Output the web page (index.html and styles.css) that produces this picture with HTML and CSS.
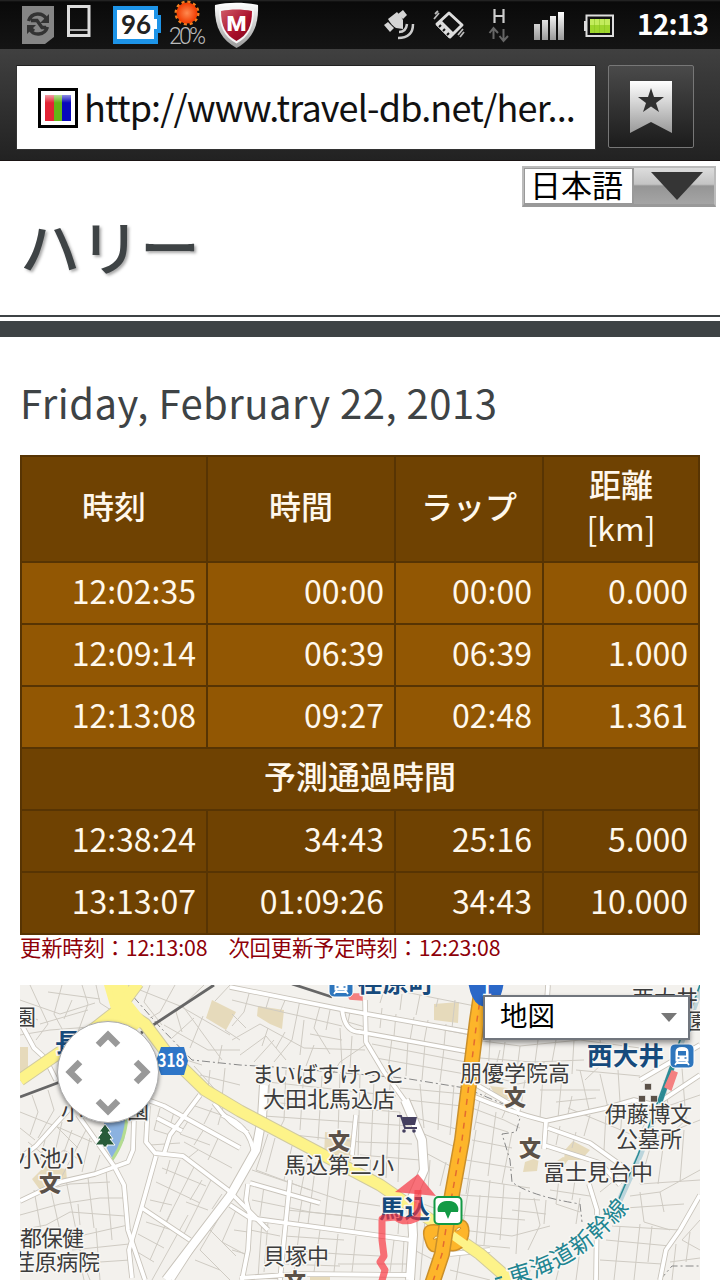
FILE: index.html
```html
<!DOCTYPE html>
<html lang="ja">
<head>
    <meta charset="UTF-8">
    <meta name="viewport" content="width=device-width, initial-scale=1.0">
    <title>ハリー</title>
    <link rel="stylesheet" href="styles.css">
</head>
<body>
    <div class="status-bar">
        <svg class="status-icons" width="270" height="49" viewBox="0 0 270 49">
            <defs>
                <linearGradient id="silver" x1="0" y1="0" x2="0" y2="1"><stop offset="0" stop-color="#fff"/><stop offset="1" stop-color="#999"/></linearGradient>
                <radialGradient id="sun"><stop offset="0" stop-color="#ff8a50"/><stop offset="1" stop-color="#f03a00"/></radialGradient>
                <linearGradient id="red" x1="0" y1="0" x2="1" y2="1"><stop offset="0" stop-color="#d05a68"/><stop offset=".6" stop-color="#a80d28"/><stop offset="1" stop-color="#7c0820"/></linearGradient>
            </defs>
            <path d="M22 6h32v31l-9 7H22z" fill="#858585"/>
            <g fill="none" stroke="#333" stroke-width="3.4">
                <path d="M28.500 21c3-9 14-9 18-2M47.500 27c-3 9-14 9-18 2M31 20.500h6l5 7h4M29 27l5 4"/>
            </g>
            <path d="M49 14v9h-9zM27 34v-9h9z" fill="#333"/>
            <path d="M68.500 6.500h20.500v29h-20.500z" fill="none" stroke="#ddd" stroke-width="3"/>
            <path d="M68 30h22" stroke="#ddd" stroke-width="1.500"/>
            <path d="M71 32.500h4m2 0h4m2 0h4" stroke="#111" stroke-width="2"/>
            <path d="M113 6h45v9h3v18h-3v11h-45z" fill="#1d94e8"/>
            <path d="M117 10h37v9h3v10h-3v10h-37z" fill="#fff"/>
            <text x="121" y="34" class="battery-num" textLength="30">96</text>
            <circle cx="187" cy="13" r="11" fill="none" stroke="#f08020" stroke-width="3" stroke-dasharray="3 2.760"/>
            <circle cx="187" cy="13" r="10.500" fill="url(#sun)"/>
            <text x="169" y="44" class="rain" textLength="37">20%</text>
            <path d="M215 5c13-3 29-3 43 0 1 21-6 35-21.500 43C221 40 214 26 215 5z" fill="url(#silver)"/>
            <path d="M219 9c11-2.500 24-2.500 35 0 0 17-5 28-17.500 34.500-12.500-6.500-17.500-17.500-17.500-34.500z" fill="#f5f5f5"/>
            <path d="M221 11c10-2 21-2 31 0 0 15-4.500 24-15.500 30-11-6-15.500-15-15.500-30z" fill="url(#red)"/>
            <text x="226.500" y="31" class="shield-m" textLength="20" lengthAdjust="spacingAndGlyphs">M</text>
        </svg>
        <svg class="status-icons" width="256" height="49" viewBox="380 0 256 49">
            <g fill="#d4d4d4">
                <path d="M384 25l4-3 6 6-4 4zM398 14l5-4 4 5-4 4zM388 19l9-7c3 4 4 4 6 8v9l-7-1c-3-2-5-4-8-9z"/>
            </g>
            <path d="M399 32q7 0 8-8M398 38q15 0 15-14" fill="none" stroke="#ccc" stroke-width="2.500"/>
            <path d="M449 13l13 12-12 12-13-13z" fill="none" stroke="#ddd" stroke-width="3" stroke-linejoin="round"/>
            <path d="M441 20l13 13-5 5-13-13z" fill="#ddd"/>
            <path d="M449 16l10 9-6 6-9-9z" fill="#111"/>
            <path d="M439 27l2-2M443 31l2-2M447 35l2-2" stroke="#111" stroke-width="2"/>
            <path d="M434 19l5-6M435 14l3-3M458 35l5-6M460 37l4-5" stroke="#bbb" stroke-width="1.800"/>
            <path d="M494.500 9v14M503.500 9v14M494 16h10" stroke="#ccc" stroke-width="2.200"/>
            <path d="M493.500 39V28m-4 5l4-5 4.500 5M503.500 29v11m-4-4l4 5 4.500-5" fill="none" stroke="#666" stroke-width="2"/>
            <path d="M534 24h6v16h-6zM542 20h6v20h-6zM550 16h6v24h-6zM558 12h6v28h-6z" fill="url(#silver)"/>
            <path d="M586.500 15.500h26.500v20.500h-26.500z" fill="#111" stroke="#ddd" stroke-width="2"/>
            <path d="M584 21h2v10h-2z" fill="#ddd"/>
            <path d="M590 19h20v14h-20z" fill="#9ed62c"/>
            <path d="M590 19h20v6h-20z" fill="#c3ec5c"/>
            <path d="M594.500 19v14M599.500 19v14M604.500 19v14" stroke="#84bc20" stroke-opacity=".5"/>
        </svg>
        <span class="clock">12:13</span>
    </div>

    <div class="address-bar">
        <div class="url-box">
            <div class="favicon"><div class="favicon-stripes"></div></div>
            <span class="url">http://www.travel-db.net/her...</span>
        </div>
        <div class="bookmark">
            <svg width="42" height="52" viewBox="0 0 42 52">
                <path d="M0 0h42v52L21 41 0 52z" fill="url(#silver)"/>
                <path d="M21 7l3 9h10l-8 6 3 9-8-5.500-8 5.500 3-9-8-6h10z" fill="#303030"/>
            </svg>
        </div>
    </div>

    <div class="page-header">
        <div class="lang-select">
            <span class="lang-name">日本語</span>
            <span class="lang-arrow"><svg width="52" height="28" viewBox="0 0 52 28"><path d="M0 0h52L26 28z" fill="#353535"/></svg></span>
        </div>
        <h1>ハリー</h1>
    </div>
    <div class="divider"></div>

    <div class="content">
        <h2>Friday, February 22, 2013</h2>

        <table class="laps">
            <colgroup><col class="c1"><col class="c2"><col class="c3"><col class="c4"></colgroup>
            <tr class="head"><th>時刻</th><th>時間</th><th>ラップ</th><th>距離<br><span class="unit">[km]</span></th></tr>
            <tr><td>12:02:35</td><td>00:00</td><td>00:00</td><td>0.000</td></tr>
            <tr><td>12:09:14</td><td>06:39</td><td>06:39</td><td>1.000</td></tr>
            <tr><td>12:13:08</td><td>09:27</td><td>02:48</td><td>1.361</td></tr>
            <tr class="dark"><th colspan="4">予測通過時間</th></tr>
            <tr class="dark"><td>12:38:24</td><td>34:43</td><td>25:16</td><td>5.000</td></tr>
            <tr class="dark"><td>13:13:07</td><td>01:09:26</td><td>34:43</td><td>10.000</td></tr>
        </table>
        <p class="updated">更新時刻：12:13:08　次回更新予定時刻：12:23:08</p>

        <div class="map">
            <svg class="map-canvas" width="680" height="295" viewBox="20 985 680 295">
                <defs>
                    <!-- 幅の広い道 -->
                    <g id="wide">
                        <path d="M264 1085L262 1118 256 1150 230 1196 166 1280"/>
                        <path d="M405 1100L422 1140 424 1170 411 1200 413 1235 410 1280"/>
                    </g>
                    <!-- 白い道 -->
                    <g id="roads">
                        <path d="M20 1201L60 1182 95 1174 128 1162 133 1150 134 1118"/>
                        <path d="M20 1022L34 1048 45 1058 56 1080M72 1106L36 1146 20 1158M78 1115L114 1166 124 1185 128 1230 145 1280"/>
                        <path d="M148 1100L164 1106 240 1148M148 1106L146 1142 155 1153 183 1156 228 1190 268 1230M157 1118L182 1131M200 1095L170 1135 164 1154M156 1156L142 1206 129 1250 132 1278M142 1208L190 1240M172 1280L212 1218M214 1103Q230 1125 248 1133"/>
                        <path d="M230 987L345 1010 474 1033M342 1008Q344 1032 360 1032L470 1052M365 1000L366 1042 384 1072 408 1105"/>
                        <path d="M222 1115Q250 1125 254 1154M250 1183L320 1203M248 1184L246 1200 250 1216 248 1250 242 1280M230 1205L250 1218 411 1240M290 1180L280 1280M240 1278L300 1274 410 1275M356 1115L352 1155"/>
                        <path d="M470 1095Q510 1112 546 1121L606 1108 634 1100 655 1105 700 1075M475 1084L520 1110M546 1121L544 1149M544 1145L600 1163 620 1185M548 1128L590 1143 625 1168M589 1184L597 1210 596 1280M700 1195L680 1230 666 1250 660 1280"/>
                        <path d="M548 985L547 1000M480 1010L484 1015M640 1080L700 1045M450 1254L490 1250"/>
                    </g>
                    <path id="yellow" d="M138 983L118 1010 95 1028 20 1080M116 980L121 1008 145 1024 166 1052 205 1090 240 1111 380 1185 480 1254 512 1282"/>
                    <path id="orange" d="M483 980L477 1020 462 1140 447 1222 442 1254 432 1284"/>
                    <path id="line-name" d="M511 1285Q580 1268 628 1209"/>
                </defs>
                <rect x="20" y="985" width="680" height="295" fill="#f3f1ed"/>
                <!-- 施設の敷地 -->
                <g fill="#e6dabb">
                    <path d="M212 1000L236 1012 226 1030 206 1018zM258 1006L284 1010 282 1029 270 1024 257 1016zM20 1047h8v24l-8 4zM32 1179L45 1166 66 1169 67 1180 40 1190zM434 1004l25-2-1 21-24-3zM325 1132l28 4-2 25-27-4zM565 1150l8-9 17 9-9 10-17 0zM490 1086l17 2 10 12-20-2zM525 1162l14-5-2 14-14 1zM551 1165l12-8 6 2-6 8zM310 1274h20v6h-20z"/>
                </g>
                <path d="M104 1120L128 1116 124 1140 113 1160 104 1143z" fill="#8bb2e0"/>
                <path d="M127 1115Q126 1140 112 1160" fill="none" stroke="#b4dc90" stroke-width="3"/>
                <!-- 区画線 -->
                <g class="parcels">
                    <path d="M20 1000L60 1014 95 1003M30 985L48 1024 36 1040M62 985L54 1014 68 1040M82 985L88 1004 78 1032M40 1024L88 1010M20 1012L38 1020M20 1035L50 1030 90 1027M96 985L100 1003 114 1012M48 992L100 999M72 1000L64 1019"/>
                    <path d="M140 990L180 1006 230 1035M150 985L144 1002 162 1025M175 985L160 1012 150 1018M204 985L176 1012 182 1032M182 1005L222 1060M230 985L215 1001M225 1030L240 1040M203 1016L190 1048M164 1025L208 1050 240 1050M172 1038L194 1018M194 1066L220 1095M222 1045L218 1064M210 1070L208 1090M225 1068L222 1098M200 1075L240 1085M180 1058L202 1065"/>
                    <path d="M20 1112L60 1128 92 1142M32 1095L38 1112 30 1135M48 1090L54 1110 38 1138M28 1142L50 1160 64 1150 80 1160M55 1125L78 1148M20 1128L35 1140M45 1140L40 1160M62 1122L56 1148M72 1130L64 1152M90 1138L82 1172M86 1130L60 1180M100 1155L94 1174M40 1191L70 1184 110 1182M20 1215L60 1204 100 1198 124 1198M34 1190L42 1236M50 1186L62 1240M66 1180L82 1260 90 1280M88 1178L94 1228M106 1170L112 1240M20 1230L46 1225 70 1212 125 1216M62 1240L128 1225M96 1228L100 1280M72 1250L129 1244M100 1262L130 1260M78 1204L80 1225M84 1280L80 1262"/>
                    <path d="M160 1108L154 1130 170 1135M174 1112L170 1126M190 1118L180 1134 210 1145M206 1126L194 1145M220 1134L208 1160M195 1106L230 1118M212 1108L204 1124M225 1100L218 1125M150 1145L180 1143M184 1142L232 1168M198 1150L188 1158M162 1168L206 1186M156 1182L200 1203M180 1160L160 1212M195 1165L166 1222M212 1178L182 1238M150 1200L172 1205M172 1210L150 1260M188 1215L152 1280M146 1222L172 1230M138 1234L164 1248M134 1250L154 1262M186 1202L208 1210M202 1180L190 1200M222 1194L212 1209M210 1230L236 1256M220 1216L200 1250 230 1280M195 1260L220 1270M236 1210L222 1242 248 1256M245 1170L238 1180M170 1160L166 1174"/>
                    <path d="M232 1000L256 1006 300 1016 342 1026M250 990L244 1012 232 1026M270 995L266 1008M300 1000L292 1040 274 1062M286 998L280 1012M320 1006L314 1028 330 1054M330 1010L326 1030M232 1040L260 1024 304 1048 365 1050M240 1055L266 1036 286 1060M254 1062L274 1040M304 1020L300 1055M340 1028L342 1066M352 1036L350 1068M310 1034L342 1040M314 1045L306 1066M365 1045L340 1062 330 1078M246 1028L232 1014M268 1028L262 1046M285 1032L276 1048M350 1012L348 1022 365 1027M382 1008L380 1028M396 1014L394 1036M414 1017L410 1040M428 1020L424 1042M446 1024L444 1046M455 1000L452 1028M370 985L420 995 475 1006M384 990L380 1003M402 994L400 1010M420 995L416 1015M438 999L436 1007M372 1016L430 1027 470 1035M372 1044L466 1062M392 1038L388 1070M408 1040L406 1076M425 1044L422 1080M444 1048L440 1082M376 1058L465 1074M400 1088L464 1094M408 1100L462 1106M420 1084L424 1128M440 1085L438 1130M454 1085L450 1135M416 1118L460 1130M424 1134L458 1148M424 1152L454 1168"/>
                    <path d="M270 1072L268 1110M286 1070L284 1120 278 1132M304 1070L300 1130M322 1076L318 1140M340 1074L338 1134M360 1074L358 1160M374 1080L370 1172M390 1085L386 1178M268 1082L396 1096M266 1102L400 1112M264 1116L410 1126M284 1134L360 1142 412 1144M360 1155L420 1160M400 1112L398 1182M268 1134L256 1170 310 1190M275 1138L266 1172M292 1146L284 1180M308 1154L300 1196M252 1200L310 1212 380 1220M264 1186L260 1216M302 1200L298 1224M316 1162L308 1224M330 1170L324 1228M346 1180L340 1230M360 1190L354 1232M252 1170L340 1200 380 1206M286 1210L350 1216M250 1230L280 1236M262 1220L258 1278M284 1236L344 1240M300 1226L294 1272M320 1230L314 1272M338 1234L334 1272M356 1236L352 1272M282 1250L340 1254 380 1256M268 1222L264 1272M394 1240L390 1272M404 1240L402 1272M338 1264L410 1264M280 1264L340 1266M234 1230L248 1232M232 1250L246 1254M400 1204L398 1234"/>
                    <path d="M416 1188L412 1200 440 1210M430 1160L428 1190M418 1215L414 1250 438 1262M425 1220L420 1280M440 1186L446 1162M450 1270L490 1280M460 1256L456 1280"/>
                    <path d="M475 1040L520 1046 580 1040 640 1048M490 1040L488 1075M505 1042L502 1064 492 1080M520 1046L516 1078M538 1040L534 1070M556 1040L552 1062M574 1040L572 1074M600 1040L604 1062 585 1080M480 1058L532 1062 584 1060M474 1070L518 1084 546 1078M500 1050L496 1066M490 1088L480 1102M510 1100L502 1118M525 1080L520 1112M544 1062L540 1118M562 1076L558 1118M580 1070L590 1114M576 1070L640 1076M600 1074L608 1108M540 1090L600 1090M556 1102L596 1098M618 1070L620 1102M572 1096L568 1114M532 1118L500 1108"/>
                    <path d="M472 1108L504 1120 520 1128M476 1122L508 1132M472 1140L512 1148M466 1160L514 1168M462 1178L530 1188M460 1195L540 1200M458 1215L525 1220M480 1100L474 1130M496 1112L488 1176M512 1132L502 1184M476 1130L466 1194M490 1180L484 1245M470 1180L462 1230M504 1184L500 1240M520 1192L516 1254M534 1198L540 1225 528 1250M462 1230L512 1236 550 1226M466 1244L510 1248M480 1195L476 1244M560 1126L556 1145M576 1132L572 1148M568 1108L640 1138M590 1115L584 1136M606 1112L604 1150M622 1112L620 1140M560 1170L556 1204 580 1212M575 1180L572 1200M550 1190L590 1196M546 1200L544 1224M512 1210L546 1214M580 1198L576 1224M615 1180L600 1192"/>
                    <path d="M700 1095L650 1112 640 1134M664 1080L668 1104M682 1068L686 1120 664 1140M700 1120L650 1140M650 1148L640 1184 700 1180M664 1140L658 1184M684 1130L680 1182M630 1196L660 1192 700 1170M625 1208L684 1204M640 1192L644 1222 670 1230M660 1192L664 1212M612 1226L680 1230M606 1240L670 1246M640 1224L634 1280M620 1226L614 1280M600 1260L662 1264M652 1226L648 1262M700 1220L682 1240 700 1250M676 1244L672 1280M690 1232L686 1262M580 1250L576 1280M560 1264L556 1280M530 1270L528 1280M670 1262L700 1258"/>
                </g>
                <path d="M123 985L160 1027 192 1060 240 1065 275 1067 403 1078 465 1088M470 1090L508 1106 520 1118 516 1132 502 1134 510 1160 512 1182Q530 1196 580 1204L582 1222M660 1280L672 1266 700 1266" class="border-line"/>
                <use href="#wide" class="casing-wide"/>
                <use href="#roads" class="casing"/>
                <use href="#roads" class="road"/>
                <use href="#wide" class="road-wide"/>
                <!-- 鉄道 -->
                <path d="M214 985L141 1033M60 1082L20 1097M292 984L332 997" fill="none" stroke="#666" stroke-width="2.800"/>
                <use href="#yellow" class="yellow-case"/>
                <path d="M104 985h24l3 16 16 20-14 12-16-10-20 12-6-10 20-16z" fill="#fdf389" stroke="none"/>
                <use href="#yellow" class="yellow-road"/>
                <path d="M426 1243q-8-20 11-18l12 3 8-8c14-2 14 14 8 24-6 8-14 8-22 4-4 6-14 6-17-5z" fill="#fdb52a" stroke="#cf9028" stroke-width="1.500"/>
                <path d="M452 1235l24 17" stroke="#fdf389" stroke-width="8"/>
                <use href="#orange" class="orange-case"/>
                <use href="#orange" class="orange-road"/>
                <use href="#orange" class="orange-dash"/>
                <path d="M433 1239q2-4 5-3-1 4-5 3zM455 1231q3-5 6-3-2 4-6 3z" fill="#f8f0c0" stroke="#cf9028"/>
                <!-- 新幹線 -->
                <path d="M702 985L672 1068 654 1118 640 1155 618 1204" fill="none" stroke="#bcd5dc" stroke-width="6"/>
                <path d="M700 985L670 1068 652 1118 638 1155 616 1206" fill="none" stroke="#2b8a94" stroke-width="1.500"/>
                <path d="M673 1066L660 1103" stroke="#2b8a94" stroke-width="4"/>
                <path d="M672 1071l5 2-6 17-6-3zM347 994h15v6l-12-1z" fill="#f48080" stroke="#f48080" stroke-width="1.500"/>

                <!-- 地名 -->
                <g class="place">
                    <text x="14" y="1025">園</text>
                    <text x="61" y="1119">小</text>
                    <text x="127" y="1118">園</text>
                    <text x="18" y="1166" textLength="65">小池小</text>
                    <text x="20" y="1246" textLength="64">都保健</text>
                    <text x="13" y="1270" textLength="87">荏原病院</text>
                    <text x="252" y="1082" textLength="153">まいばすけっと</text>
                    <text x="263" y="1107" textLength="132">大田北馬込店</text>
                    <text x="284" y="1173" textLength="110">馬込第三小</text>
                    <text x="263" y="1264" textLength="66">貝塚中</text>
                    <text x="460" y="1081" textLength="110">朋優学院高</text>
                    <text x="605" y="1122" textLength="87">伊藤博文</text>
                    <text x="616" y="1147" textLength="66">公墓所</text>
                    <text x="543" y="1180" textLength="110">冨士見台中</text>
                    <text x="632" y="1006" textLength="66">西大井</text>
                    <text x="687" y="1029">園</text>
                </g>
                <g class="school">
                    <text x="39" y="1191">文</text>
                    <text x="328" y="1149">文</text>
                    <text x="504" y="1105">文</text>
                    <text x="519" y="1156">文</text>
                    <text x="284" y="1289">文</text>
                </g>
                <g class="station">
                    <text x="55" y="1052">長</text>
                    <text x="357" y="992" textLength="77">荏原町</text>
                    <text x="379" y="1218" textLength="51">馬込</text>
                    <text x="587" y="1065" textLength="77">西大井</text>
                </g>
                <text class="shinkansen"><textPath href="#line-name" textLength="144">東海道新幹線</textPath></text>
                <path d="M495 1279l7-2" stroke="#228591" stroke-width="2"/>

                <!-- 記号 -->
                <g id="train">
                    <rect x="670" y="1044" width="24" height="24" rx="5" fill="#2e76bd" stroke="#fff"/>
                    <path d="M675.500 1052q0-5 6.500-5t6.500 5v9.500h-13z" fill="#fff"/>
                    <path d="M678 1051h8v4.500h-8z" fill="#2e76bd"/>
                    <path d="M678 1061l-3 4m11-4l3 4m-12-2h10" stroke="#fff" stroke-width="1.800"/>
                    <path d="M677.500 1058h2m5 0h2" stroke="#2e76bd" stroke-width="1.500"/>
                </g>
                <use href="#train" x="-341" y="-71"/>
                <rect x="434.500" y="1197" width="27" height="27" rx="4" fill="#fff" stroke="#139a45" stroke-width="2"/>
                <path d="M448 1201c7-1 12 5 10 11h-7l-3 7-3-7h-7c-2-6 3-12 10-11z" fill="#139a45"/>
                <path d="M161 1047h23l4 14-4 14h-23l-5-14z" fill="#2e76c8"/>
                <text x="157.500" y="1067" class="route-no" textLength="27" lengthAdjust="spacingAndGlyphs">318</text>
                <path d="M468 980h36q-2 21-12 25-6 3-13 0-9-6-11-25z" fill="#2b68c8"/>
                <text x="481.500" y="996" class="route-no">1</text>
                <path d="M105 1124l6 8h-3l5 7h-3l5 6h-8v2h-4v-2h-8l5-6h-3l5-7h-3z" fill="#285b3a" stroke="#fff" stroke-width="1"/>
                <path d="M644.500 1083.500h7v6.500h-7zM638.500 1095.500h7v6.500h-7zM650.500 1095.500h7v6.500h-7z" fill="#5b5148" stroke="#fff" stroke-width=".6"/>
                <path d="M397 1116h4l4 12h12" fill="none" stroke="#454060" stroke-width="2"/>
                <path d="M402 1117h15l-2 8h-11z" fill="#454060"/>
                <circle cx="404" cy="1131" r="1.800" fill="#454060"/><circle cx="414" cy="1131" r="1.800" fill="#454060"/>

                <!-- 走行ルート -->
                <path d="M418 1190L417 1218Q404 1224 396 1217L384 1218 382 1219 382 1240 384 1256 380 1262 385 1270 381 1284" fill="none" stroke="#f9303c" stroke-opacity=".68" stroke-width="7" stroke-linejoin="round"/>
                <path d="M418 1174L436 1196 395 1192z" fill="#f5404c" fill-opacity=".75"/>
            </svg>

            <svg class="pan-control" width="104" height="104" viewBox="-52 -52 104 104">
                <circle r="50.500" fill="#fff" stroke="#aaa"/>
                <g fill="none" stroke="#999" stroke-width="6.500">
                    <path d="M-10-27L0-37 10-27M-10 29L0 39 10 29M-28-10L-38 0-28 10M28-10L38 0 28 10"/>
                </g>
            </svg>

            <div class="map-type">
                <span>地図</span>
                <svg width="16" height="9" viewBox="0 0 16 9"><path d="M0 0h16L8 9z" fill="#777"/></svg>
            </div>
        </div>
    </div>
</body>
</html>
```
FILE: styles.css
```css
* {
    box-sizing: border-box;
}

body {
    margin: 0;
    width: 720px;
    height: 1280px;
    overflow: hidden;
    background-color: #fff;
    font-family: 'Noto Sans CJK JP', 'Noto Sans', sans-serif;
    color: #3e4345;
}

svg {
    display: block;
    flex: none;
}

/* ステータスバー */
.status-bar {
    display: flex;
    align-items: center;
    height: 49px;
    background: linear-gradient(#2a2a2a 0, #0a0a0a 2px, #141414 100%);
}

.status-bar .status-icons + .status-icons {
    margin-left: 110px;
}

.battery-num {
    font: bold 26px Lato, sans-serif;
    fill: #222;
}

.rain {
    font: 300 23px Roboto, sans-serif;
    fill: #bbb;
}

.shield-m {
    font: 900 20px Roboto, sans-serif;
    fill: #fff;
}

.clock {
    width: 72px;
    margin: 0 0 3px 1px;
    font-size: 28px;
    line-height: 40px;
    font-weight: bold;
    letter-spacing: -0.8px;
    color: #fff;
}

/* アドレスバー */
.address-bar {
    display: flex;
    align-items: flex-start;
    gap: 12px;
    height: 112px;
    padding: 16px 0 0 16px;
    background: linear-gradient(#404040, #222);
    border-bottom: 1px solid #1a1414;
}

.url-box {
    display: flex;
    align-items: center;
    width: 580px;
    height: 85px;
    padding-left: 21px;
    background-color: #fff;
    border: 1px solid #333;
    border-top-color: #222;
}

.favicon {
    width: 40px;
    height: 40px;
    padding: 4px;
    border: 3px solid #000;
}

.favicon-stripes {
    width: 26px;
    height: 26px;
    background: linear-gradient(rgba(255,255,255,.55), transparent 30%), linear-gradient(90deg, #e32435 0 36%, #62b516 36% 66%, #0808bd 66%);
}

.url {
    margin: -4px 0 0 6px;
    font-size: 36px;
    line-height: 50px;
    letter-spacing: -0.85px;
    color: #111;
    white-space: nowrap;
}

.bookmark {
    display: flex;
    justify-content: center;
    width: 86px;
    height: 83px;
    padding-top: 15px;
    background: linear-gradient(#4a4a4a, #1c1c1c);
    border: 1px solid #777;
    border-radius: 2px;
}

/* ページヘッダー */
.page-header {
    display: flex;
    flex-direction: column;
    height: 154px;
}

.lang-select {
    display: flex;
    align-self: flex-end;
    width: 194px;
    height: 41px;
    margin: 5px 4px 0 0;
    border: 2px solid #bbb;
    border-bottom: 3px solid #999;
    background: linear-gradient(#ddd 0, #c4c4c4 45%, #959595 50%, #a5a5a5 100%);
}

.lang-name {
    width: 110px;
    padding-left: 5px;
    font-size: 31px;
    line-height: 29px;
    color: #000;
    background-color: #fff;
    border: 1px solid #999;
    border-right-width: 2px;
}

.lang-arrow {
    padding: 4px 0 0 17px;
}

h1 {
    margin: -4px 0 0 20px;
    font-size: 60px;
    line-height: 84px;
    font-weight: 500;
    text-shadow: 2px 2px 3px #aaa;
}

.divider {
    height: 22px;
    border-top: 2px solid #3e4345;
    border-bottom: 16px solid #3e4345;
}

.content {
    padding: 0 20px;
}

h2 {
    margin: 0 0 23px;
    padding-top: 35px;
    font-size: 40px;
    line-height: 60px;
    font-weight: normal;
    letter-spacing: 0.5px;
    white-space: nowrap;
}

/* ラップ表 */
.laps {
    width: 680px;
    table-layout: fixed;
    border-collapse: collapse;
    font-size: 32px;
    line-height: 44px;
    color: #fff8ec;
}

.c1 { width: 186px; }
.c2 { width: 188px; }
.c3 { width: 148px; }
.c4 { width: 156px; }

.laps th,
.laps td {
    height: 62px;
    padding: 0 10px 6px 4px;
    border: 2px solid #573403;
    background-color: #925703;
    text-align: right;
    font-weight: normal;
}

.laps th {
    padding: 0 4px 8px;
    text-align: center;
    font-weight: 500;
}

.laps .unit {
    font-weight: normal;
}

.laps .head th {
    height: 106px;
}

.laps .head th,
.laps .dark th,
.laps .dark td {
    background-color: #6f4202;
}

.updated {
    margin: 0;
    height: 50px;
    font-size: 21.3px;
    line-height: 23px;
    letter-spacing: -0.15px;
    color: #8e0008;
    white-space: nowrap;
}

/* 地図 */
.map {
    position: relative;
    height: 295px;
    overflow: hidden;
}

.parcels {
    fill: none;
    stroke: #cfcbc3;
    stroke-width: 1;
}

.border-line {
    fill: none;
    stroke: #888;
    stroke-width: 1;
    stroke-dasharray: 8 3 2 3;
}

.casing, .casing-wide, .road, .road-wide {
    fill: none;
    stroke-linejoin: round;
}

.casing { stroke: #c8c3ba; stroke-width: 5.5px; }
.casing-wide { stroke: #c8c3ba; stroke-width: 10px; }
.road { stroke: #fff; stroke-width: 3.8px; }
.road-wide { stroke: #fff; stroke-width: 8px; }

.yellow-case, .yellow-road, .orange-case, .orange-road, .orange-dash {
    fill: none;
    stroke-linejoin: round;
}

.yellow-case { stroke: #d0caa0; stroke-width: 13px; }
.yellow-road { stroke: #fdf389; stroke-width: 11px; }
.orange-case { stroke: #c98f2b; stroke-width: 16px; }
.orange-road { stroke: #fdb52a; stroke-width: 13px; }
.orange-dash { stroke: #e46b30; stroke-width: 1.5px; stroke-dasharray: 6 6; }

.place, .school, .station, .shinkansen, .route-no {
    font-family: 'Noto Sans CJK JP', sans-serif;
    stroke: #f8f7f4;
    stroke-width: 3px;
    stroke-linejoin: round;
    paint-order: stroke;
}

.place {
    font-size: 22px;
    fill: #3c3c3c;
}

.school {
    font-size: 22px;
    font-weight: 900;
    fill: #5b5148;
}

.station {
    font-size: 25.5px;
    font-weight: bold;
    fill: #164a7c;
}

.shinkansen {
    font-size: 23px;
    fill: #228591;
}

.route-no {
    font-size: 18px;
    font-weight: bold;
    fill: #fff;
    stroke: none;
}

.pan-control {
    position: absolute;
    left: 36px;
    top: 35px;
    filter: drop-shadow(0 2px 2px rgba(0, 0, 0, .45));
}

.map-type {
    position: absolute;
    left: 463px;
    top: 10px;
    display: flex;
    align-items: center;
    justify-content: space-between;
    width: 207px;
    height: 45px;
    padding: 0 11px 0 15px;
    font-size: 27.5px;
    line-height: 38px;
    color: #000;
    background-color: #fff;
    border: 2px solid #71767d;
    box-shadow: 0 3px 5px rgba(0, 0, 0, .4);
}

.map-type span {
    margin-top: -7px;
}
```
